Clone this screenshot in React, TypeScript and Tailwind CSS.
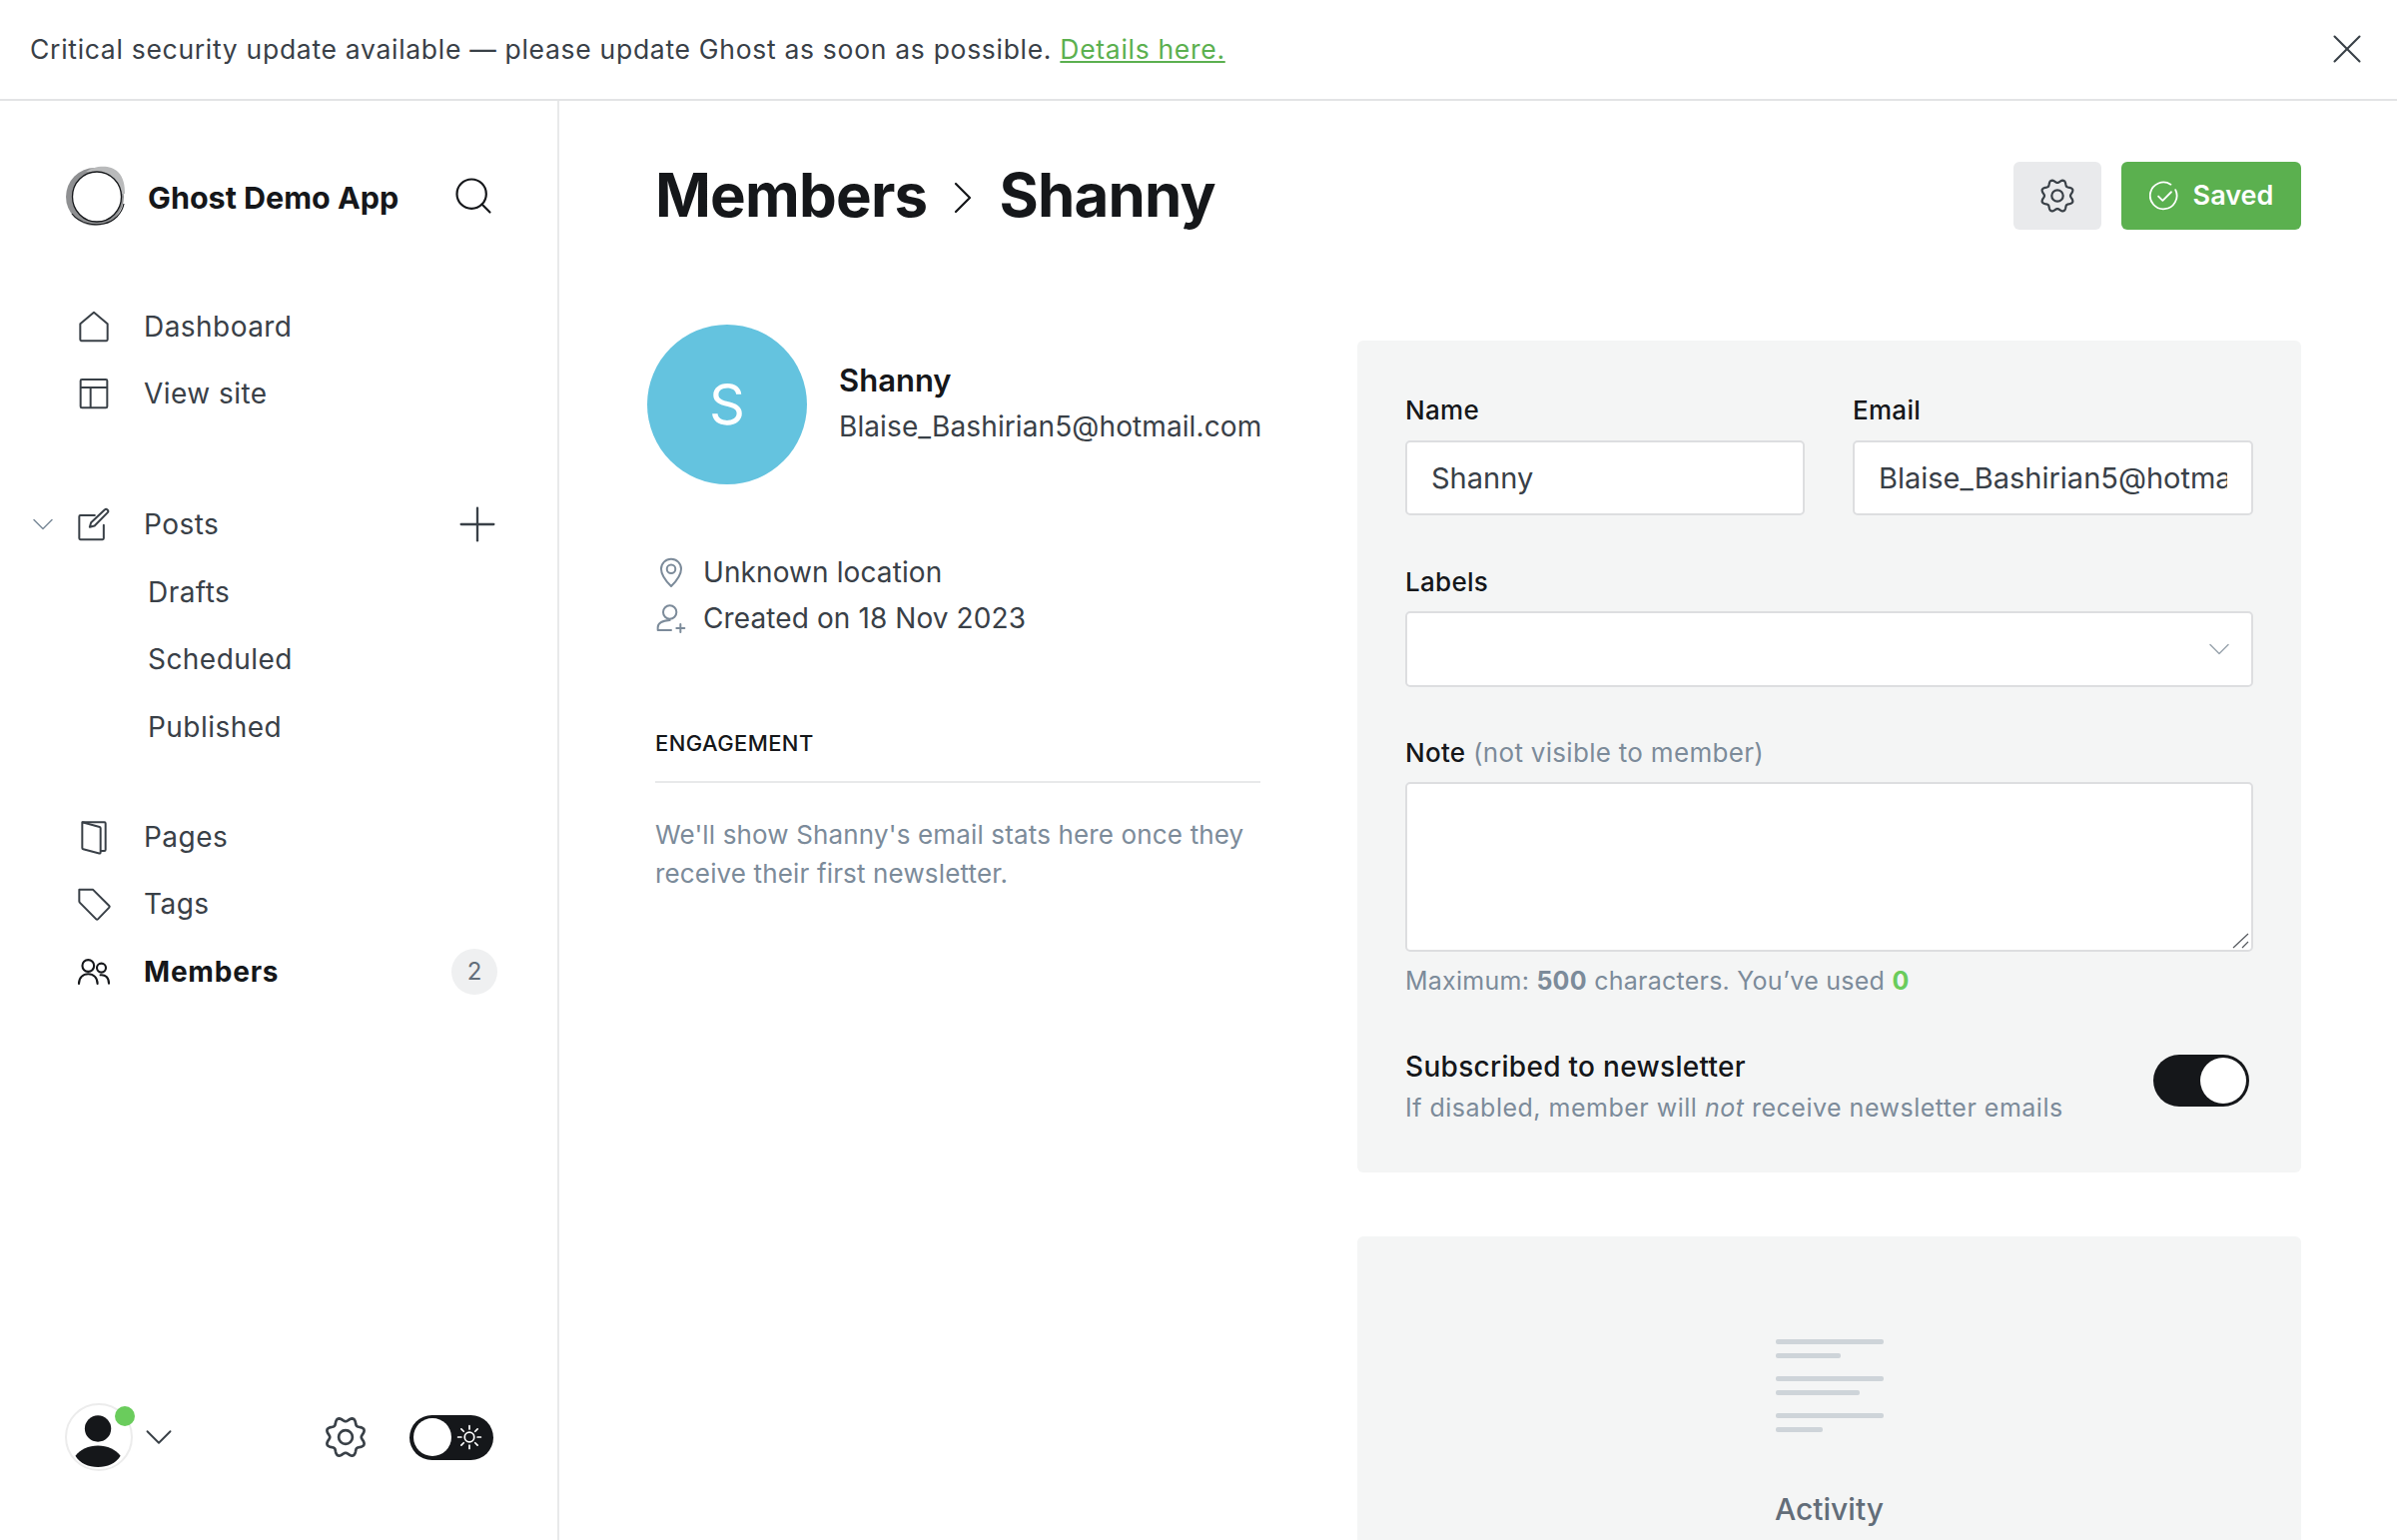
import type { ReactNode } from "react";
import { ChevronDown, ChevronRight, X, Search, Plus } from "lucide-react";

// scalloped outline, 8 lobes with a valley on top
const gearPath =
    Array.from({ length: 96 }, (_, i) => {
        const a = (i / 96) * Math.PI * 2;
        const r = 9.3 + 1.1 * Math.cos(8 * a + Math.PI);
        return `${i === 0 ? "M" : "L"}${(12 + r * Math.sin(a)).toFixed(2)} ${(12 - r * Math.cos(a)).toFixed(2)}`;
    }).join("") + "Z";

const Gear = ({ className = "" }: { className?: string }) => (
    <svg viewBox="0 0 24 24" fill="none" stroke="currentColor" strokeWidth="1.4" strokeLinejoin="round" className={className}>
        <circle cx="12" cy="12" r="3.6" />
        <path d={gearPath} />
    </svg>
);

const iconClass = "w-[40px] h-[40px] shrink-0 text-[#394047]";

const HomeIcon = () => (
    <svg viewBox="0 0 24 24" fill="none" stroke="currentColor" strokeWidth="1.200" strokeLinejoin="round" className={iconClass}>
        <path d="M3.800 10.400 12 3.400l8.200 7v9.400a.7.7 0 0 1-.7.7H4.500a.7.7 0 0 1-.7-.7z" />
    </svg>
);
const LayoutIcon = () => (
    <svg viewBox="0 0 24 24" fill="none" stroke="currentColor" strokeWidth="1.200" strokeLinejoin="round" className={iconClass}>
        <rect x="4" y="3.600" width="16" height="17" rx=".8" />
        <path d="M4 8.400h16M10 8.400v12.200" />
    </svg>
);
const PostIcon = () => (
    <svg viewBox="0 0 24 24" fill="none" stroke="currentColor" strokeWidth="1.200" strokeLinejoin="round" strokeLinecap="round" className={iconClass}>
        <path d="M12.500 6.600H3.900a.7.7 0 0 0-.7.700v13.100c0 .4.300.7.700.7h13.300c.4 0 .7-.3.700-.7v-7.900" />
        <path d="M18.600 3.200c.9-.9 2.600.7 1.700 1.700l-7.900 8-2.900.8.800-2.800z" />
    </svg>
);
const PagesIcon = () => (
    <svg viewBox="0 0 24 24" fill="none" stroke="currentColor" strokeWidth="1.200" strokeLinejoin="round" className={iconClass}>
        <path d="M5 3.200h13.300c.4 0 .7.300.7.700v15.800c0 .4-.3.700-.7.700H16" />
        <path d="M5 3.200 15.400 6c.4.100.6.400.6.800v14.500c0 .500-.4.700-.8.600L5.600 19.400a.8.800 0 0 1-.6-.8z" />
    </svg>
);
const TagIcon = () => (
    <svg viewBox="0 0 24 24" fill="none" stroke="currentColor" strokeWidth="1.200" strokeLinejoin="round" className={iconClass}>
        <path d="M3.200 3.500h8.300l9.700 9.700c.3.300.3.700 0 1l-6.800 7c-.3.300-.7.300-1 0l-9.800-9.900c-.2-.2-.4-.5-.4-.8V3.500z" />
    </svg>
);
const MembersIcon = () => (
    <svg viewBox="0 0 24 24" fill="none" stroke="#15171a" strokeWidth="1.400" strokeLinecap="round" className="mx-[2px] w-[36px] h-[36px] shrink-0">
        <circle cx="8.200" cy="8" r="3.900" />
        <path d="M2 20c0-4 2.600-6.500 6.200-6.500s6.200 2.500 6.200 6.500" />
        <circle cx="17" cy="9.400" r="3" />
        <path d="M16.400 14.200c3.200-.4 5.600 1.700 5.600 5.600" />
    </svg>
);

const NavRow = ({ icon, label, active, left, right }: { icon: ReactNode; label: string; active?: boolean; left?: ReactNode; right?: ReactNode }) => (
    <div className="relative flex items-center h-[67.400px] pl-[74px] pr-[60px]">
        {left}
        {icon}
        <span className={`ml-[30px] text-[28px] ${active ? "font-bold tracking-[0.8px] text-[#15171a]" : "tracking-[0.45px] text-[#394047]"}`}>{label}</span>
        <div className="ml-auto">{right}</div>
    </div>
);

const SubRow = ({ label }: { label: string }) => (
    <div className="flex items-center h-[67.400px] pl-[148px] text-[28px] tracking-[0.45px] text-[#394047]">{label}</div>
);

const Logo = () => (
    <svg viewBox="0 0 60 60" fill="none" className="w-[60px] h-[60px] shrink-0">
        <ellipse cx="29" cy="31" rx="29" ry="29" fill="#8f9092" />
        <path d="M20 6C28 0 44-2 52 6c6 6 7 14 7 22l-3 0C52 14 36 6 20 6z" fill="#b9babb" />
        <ellipse cx="31" cy="31" rx="24.500" ry="25" fill="white" stroke="#15171a" strokeWidth="1.300" />
        <path d="M6 48c8 10 22 12 32 10 10-2 18-10 20-20" stroke="#15171a" strokeWidth="1.200" />
    </svg>
);

const labelClass = "block text-[26px] leading-[30px] font-medium text-[#15171a] tracking-[0.3px]";

const Field = ({ label, value, className = "" }: { label: string; value: string; className?: string }) => (
    <div className={className}>
        <label className={labelClass}>{label}</label>
        <input readOnly value={value} className="mt-[15px] block w-full h-[75px] px-[24px] bg-white border-2 border-[#dddee0] rounded-[5px] text-[29px] text-[#394047] outline-none font-[Inter]" />
    </div>
);

const ActivityBars = () => (
    <div className="flex flex-col w-[108px] mx-auto">
        {[108, 65, 0, 108, 84, 0, 108, 47].map((w, i) =>
            w === 0 ? (
                <div key={i} className="h-[18px]" />
            ) : (
                <div key={i} className={`h-[5px] rounded-[2px] bg-[#ced4d9] ${i === 1 || i === 4 || i === 7 ? "mt-[9px]" : ""}`} style={{ width: w }} />
            )
        )}
    </div>
);

export default function App() {
    return (
        <div className="h-[1542px] overflow-hidden bg-white font-[Inter] flex flex-col">
            {/* update banner */}
            <div className="flex items-center justify-between h-[101px] shrink-0 border-b-2 border-[#e3e4e5] pl-[30px] pr-[25px] text-[26.500px] tracking-[0.7px] text-[#394047]">
                <div>
                    Critical security update available — please update Ghost as soon as possible.{" "}
                    <span className="text-[#5bb04f] underline">Details here.</span>
                </div>
                <X className="w-[50px] h-[50px] mb-[2px] text-[#394047]" strokeWidth={1} />
            </div>

            <div className="flex flex-1 min-h-0">
                <aside className="w-[560px] shrink-0 border-r-2 border-[#e8e9ea] flex flex-col justify-between pb-[69px]">
                    <div>
                        <div className="flex items-center h-[60px] mt-[65px] pl-[66px] pr-[62px]">
                            <Logo />
                            <span className="ml-[22px] mt-[3px] text-[30.500px] font-bold text-[#15171a]">Ghost Demo App</span>
                            <Search className="ml-auto w-[44px] h-[44px] text-[#15171a]" strokeWidth={1.200} />
                        </div>
                        <nav className="mt-[67px]">
                            <NavRow icon={<HomeIcon />} label="Dashboard" />
                            <NavRow icon={<LayoutIcon />} label="View site" />
                            <div className="mt-[64px]">
                                <NavRow
                                    icon={<PostIcon />}
                                    label="Posts"
                                    left={<ChevronDown className="absolute left-[25px] w-[36px] h-[36px] text-[#7c8b9a]" strokeWidth={1} />}
                                    right={<Plus className="w-[56px] h-[56px] -mr-[8px] text-[#394047]" strokeWidth={1} />}
                                />
                                <SubRow label="Drafts" />
                                <SubRow label="Scheduled" />
                                <SubRow label="Published" />
                            </div>
                            <div className="mt-[43px]">
                                <NavRow icon={<PagesIcon />} label="Pages" />
                                <NavRow icon={<TagIcon />} label="Tags" />
                                <NavRow
                                    icon={<MembersIcon />}
                                    label="Members"
                                    active
                                    right={
                                        <span className="flex items-center justify-center w-[46px] h-[46px] rounded-full bg-[#eff0f1] text-[24px] text-[#626d79]">2</span>
                                    }
                                />
                            </div>
                        </nav>
                    </div>

                    <div className="flex items-center pl-[65px] pr-[64px]">
                        <div className="relative w-[68px] h-[68px] rounded-full border-2 border-[#ececec] overflow-visible">
                            <svg viewBox="0 0 68 68" className="w-full h-full">
                                <circle cx="33" cy="25" r="14" fill="#15171a" />
                                <path d="M9 54c5-7 14-11 24-11s19 4 24 11c-5 8-14 12-24 12S14 62 9 54z" fill="#15171a" />
                            </svg>
                            <span className="absolute top-[1px] left-[48px] w-[20px] h-[20px] rounded-full bg-[#6acc5c]" />
                        </div>
                        <ChevronDown className="ml-[3px] w-[46px] h-[46px] text-[#394047]" strokeWidth={1} />
                        <Gear className="ml-auto w-[46px] h-[46px] text-[#394047]" />
                        <div className="ml-[41px] flex items-center w-[84px] h-[45px] rounded-full bg-[#15171a] pl-[4px]">
                            <span className="w-[38px] h-[38px] rounded-full bg-white" />
                            <svg viewBox="0 0 24 24" fill="none" stroke="white" strokeWidth="1.600" strokeLinecap="round" className="ml-[5px] w-[26px] h-[26px]">
                                <circle cx="12" cy="12" r="4.400" />
                                <path d="M12 1.500v3M12 19.500v3M1.500 12h3M19.500 12h3M4.500 4.500l2.200 2.200M17.300 17.300l2.200 2.200M4.500 19.500l2.200-2.200M17.300 6.700l2.200-2.200" />
                            </svg>
                        </div>
                    </div>
                </aside>

                <main className="flex-1 min-w-0 pl-[96px] pr-[96px]">
                    <div className="flex items-center justify-between pt-[61px]">
                        <div className="flex items-center mb-[3px] text-[60px] leading-[62px] font-bold text-[#15171a] tracking-[-0.8px]">
                            <span>Members</span>
                            <ChevronRight className="mx-[8px] mt-[6px] w-[56px] h-[56px]" strokeWidth={0.95} />
                            <span>Shanny</span>
                        </div>
                        <div className="flex gap-[20px]">
                            <button className="flex items-center justify-center w-[88px] h-[68px] rounded-[6px] bg-[#e9eaec]">
                                <Gear className="w-[38px] h-[38px] text-[#394047]" />
                            </button>
                            <button className="flex items-center justify-center gap-[14px] w-[180px] h-[68px] rounded-[6px] bg-[#5bb04f] text-white text-[27px] font-semibold">
                                <svg viewBox="0 0 28 28" fill="none" stroke="white" strokeWidth="1.700" strokeLinecap="round" strokeLinejoin="round" className="w-[30px] h-[30px]">
                                    <path d="M24.500 8.500A12.500 12.500 0 1 1 20 3.400" />
                                    <path d="M8.500 14.500l4 4 8-8" />
                                </svg>
                                Saved
                            </button>
                        </div>
                    </div>

                    <div className="flex gap-[97px] mt-[111px]">
                        <div className="w-[606px] shrink-0 -mt-[16px]">
                            <div className="flex items-center -ml-[8px]">
                                <div className="flex items-center justify-center shrink-0 w-[160px] h-[160px] rounded-full bg-[#64c3df] text-white text-[56px]">S</div>
                                <div className="ml-[32px] shrink-0">
                                    <div className="-mt-[2px] text-[31px] leading-[40px] font-semibold text-[#15171a]">Shanny</div>
                                    <div className="mt-[6px] text-[28px] leading-[40px] tracking-[0.1px] text-[#394047]">Blaise_Bashirian5@hotmail.com</div>
                                </div>
                            </div>
                            <div className="mt-[65px] text-[28px] text-[#394047] tracking-[0.1px]">
                                <div className="flex items-center h-[46px]">
                                    <svg viewBox="0 0 24 24" fill="none" stroke="#7c8b9a" strokeWidth="1.500" className="w-[32px] h-[32px] shrink-0">
                                        <path d="M12 22.500C8 18.500 4.500 14.500 4.500 9.500a7.500 7.500 0 0 1 15 0c0 5-3.500 9-7.500 13z" strokeLinejoin="round" />
                                        <circle cx="12" cy="9.500" r="3.200" />
                                    </svg>
                                    <span className="ml-[16px]">Unknown location</span>
                                </div>
                                <div className="flex items-center h-[46px]">
                                    <svg viewBox="0 0 24 24" fill="none" stroke="#7c8b9a" strokeWidth="1.500" strokeLinecap="round" className="w-[32px] h-[32px] shrink-0">
                                        <circle cx="11" cy="7.500" r="5" />
                                        <path d="M2 21v-2c0-3 2-5 9-5.500M2 21h10M19 16.500v6M16 19.500h6" />
                                    </svg>
                                    <span className="ml-[16px]">Created on 18 Nov 2023</span>
                                </div>
                            </div>
                            <div className="mt-[88px] pb-[24px] border-b-2 border-[#e8e9ea] text-[22px] leading-[28px] font-medium text-[#15171a] tracking-[0.4px]">ENGAGEMENT</div>
                            <p className="mt-[33px] text-[26px] leading-[38.500px] tracking-[0.15px] text-[#7c8b9a]">
                                We'll show Shanny's email stats here once they receive their first newsletter.
                            </p>
                        </div>

                        <div className="flex-1 min-w-0">
                            <div className="rounded-[6px] bg-[#f4f5f5] px-[48px] pt-[55px] h-[833px]">
                                <div className="flex gap-[48px]">
                                    <Field label="Name" value="Shanny" className="w-[400px]" />
                                    <Field label="Email" value="Blaise_Bashirian5@hotmail.com" className="flex-1 min-w-0" />
                                </div>
                                <div className="mt-[52px]">
                                    <label className={labelClass}>Labels</label>
                                    <div className="mt-[14px] flex items-center justify-end h-[76px] pr-[14px] bg-white border-2 border-[#dddee0] rounded-[5px]">
                                        <ChevronDown className="w-[36px] h-[36px] text-[#9aa5ae]" strokeWidth={1} />
                                    </div>
                                </div>
                                <div className="mt-[51px]">
                                    <label className="block text-[26px] leading-[30px] tracking-[0.3px] text-[#7c8b9a]">
                                        <span className="font-medium text-[#15171a]">Note</span> (not visible to member)
                                    </label>
                                    <div className="relative mt-[14px]">
                                        <textarea readOnly className="block w-full h-[170px] resize-none bg-white border-2 border-[#dddee0] rounded-[5px] outline-none" />
                                        {/* resize grip */}
                                        <svg viewBox="0 0 18 16" fill="none" stroke="#55595e" strokeWidth="1.200" className="absolute right-[3px] bottom-[3px] w-[18px] h-[16px]">
                                            <path d="M1 15 16 1M10 15l6-6" />
                                        </svg>
                                    </div>
                                    <div className="mt-[14px] text-[25px] leading-[30px] tracking-[0.25px] text-[#7c8b9a]">
                                        Maximum: <b className="font-bold">500</b> characters. You’ve used <b className="font-bold text-[#6acc5c]">0</b>
                                    </div>
                                </div>
                                <div className="flex items-start justify-between mt-[53px]">
                                    <div>
                                        <div className="text-[28px] leading-[36px] font-medium text-[#15171a] tracking-[0.3px]">Subscribed to newsletter</div>
                                        <div className="mt-[8px] text-[25px] leading-[30px] tracking-[0.5px] text-[#7c8b9a]">
                                            If disabled, member will <i>not</i> receive newsletter emails
                                        </div>
                                    </div>
                                    <div className="flex items-center justify-end w-[96px] h-[52px] mr-[4px] mt-[6px] rounded-full bg-[#15171a] pr-[3px]">
                                        <span className="w-[46px] h-[46px] rounded-full bg-white" />
                                    </div>
                                </div>
                            </div>

                            <div className="mt-[64px] rounded-[6px] bg-[#f4f5f5] pt-[103px] h-[320px]">
                                <ActivityBars />
                                <div className="mt-[58px] text-center text-[30px] leading-[38px] font-medium text-[#626d79]">Activity</div>
                            </div>
                        </div>
                    </div>
                </main>
            </div>
        </div>
    );
}
